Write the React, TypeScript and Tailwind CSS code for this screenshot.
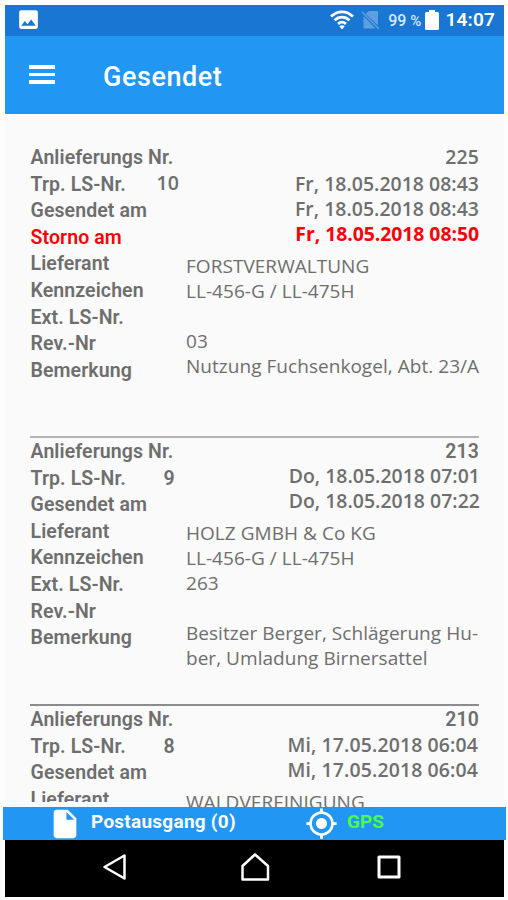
import React from 'react';
import { MdImage, MdInsertDriveFile, MdMyLocation } from 'react-icons/md';

interface Delivery {
  nr: string;
  nrClass: string;
  lsNr: string;
  lsNrClass: string;
  dates: string[];
  dateClass: string;
  storno?: string;
  values: string[]; // Lieferant, Kennzeichen, Ext. LS-Nr., Rev.-Nr, Bemerkung
  labels: string[];
  className: string;
}

const allLabels = ['Lieferant', 'Kennzeichen', 'Ext. LS-Nr.', 'Rev.-Nr', 'Bemerkung'];

const deliveries: Delivery[] = [
  {
    nr: '225',
    nrClass: "h-[27px] font-['Open_Sans',sans-serif]",
    lsNr: '10',
    lsNrClass: "-top-[2px] left-[126px] font-semibold font-['Open_Sans',sans-serif]",
    dates: ['Fr, 18.05.2018 08:43', 'Fr, 18.05.2018 08:43'],
    dateClass: 'tracking-[0.05px]',
    storno: 'Fr, 18.05.2018 08:50',
    values: ['FORSTVERWALTUNG', 'LL-456-G / LL-475H', '', '03', 'Nutzung Fuchsenkogel, Abt. 23/A'],
    labels: allLabels,
    className: 'h-[292px]',
  },
  {
    nr: '213',
    nrClass: 'h-[25px] pt-px font-[Roboto,sans-serif]',
    lsNr: '9',
    lsNrClass: 'top-0 left-[133px]',
    dates: ['Do, 18.05.2018 07:01', 'Do, 18.05.2018 07:22'],
    dateClass: '-mr-px tracking-[0.05px]',
    values: ['HOLZ GMBH & Co KG', 'LL-456-G / LL-475H', '263', '', 'Besitzer Berger, Schlägerung Hu-', 'ber, Umladung Birnersattel'],
    labels: allLabels,
    className: 'h-[268px] border-t-2 border-[#b3b3b3]',
  },
  {
    nr: '210',
    nrClass: 'h-[26px] pt-px font-[Roboto,sans-serif]',
    lsNr: '8',
    lsNrClass: 'top-0 left-[133px]',
    dates: ['Mi, 17.05.2018 06:04', 'Mi, 17.05.2018 06:04'],
    dateClass: 'mr-px tracking-[0.15px]',
    values: ['WALDVEREINIGUNG'],
    labels: ['Lieferant'],
    className: 'h-[103px] border-t-2 border-[#8c8c8c]',
  },
];

const StatusBar: React.FC = () => (
  <div className="h-[31px] bg-[#1976d2] flex items-center text-white pl-[11px] pr-[9px]">
    <MdImage className="w-[25px] h-[25px] -mt-0.5" />
    <div className="flex-1" />
    <svg className="w-[24px] h-[20px] -mt-[2px]" viewBox="0 0 24 20" fill="none" stroke="white" strokeWidth="2.8">
      <path d="M1 6.5C7.5 0.2 16.5 0.2 23 6.5" />
      <path d="M4.6 10.2C9 6.2 15 6.2 19.4 10.2" />
      <path d="M8 13.8C10.4 11.8 13.6 11.8 16 13.8" />
      <path d="M9.3 16.2L12 19.4L14.7 16.2Q12 14.2 9.3 16.2Z" fill="white" stroke="none" />
    </svg>
    <svg className="w-[19px] h-[20px] ml-[7px] -mt-[2px]" viewBox="0 0 19 20">
      <path d="M8 1H17V15.5L4.5 3.8ZM2.5 6L14.5 18.5H2.5Z" fill="#5e9fe0" />
      <path d="M0.8 1.8L18 19" stroke="#5e9fe0" strokeWidth="1.5" />
    </svg>
    <span className="ml-[8px] text-[16px] font-medium text-[#d6e8fa] whitespace-nowrap">
      99 <span className="text-[15px]">%</span>
    </span>
    <svg className="w-[14px] h-[20px] ml-[4px] -mt-[2px]" viewBox="0 0 14 20" fill="white">
      <path d="M4 0H10V2H12.5Q14 2 14 3.5V18.5Q14 20 12.5 20H1.5Q0 20 0 18.5V3.5Q0 2 1.5 2H4Z" />
    </svg>
    <span className="ml-[6px] text-[19px] font-semibold tracking-[0.2px] whitespace-nowrap">14:07</span>
  </div>
);

const Header: React.FC = () => (
  <div className="h-[78px] bg-[#2196f3] flex items-center text-white pl-[24px]">
    <div className="w-[26px] flex flex-col gap-[4px] -mt-[1px]">
      <div className="h-[3.5px] bg-white" />
      <div className="h-[3.5px] bg-white" />
      <div className="h-[3.5px] bg-white" />
    </div>
    <h1 className="ml-[48px] mt-[4px] text-[27px] font-medium tracking-[0.55px]">Gesendet</h1>
  </div>
);

const DeliveryEntry: React.FC<{ delivery: Delivery }> = ({ delivery }) => (
  <div className={`flex shrink-0 text-[#6e6e6e] ${delivery.className}`}>
    <div className="w-[156px] shrink-0 pt-px pl-[0.5px] mb-[5px] overflow-hidden text-[19.5px] font-semibold leading-[26.6px] tracking-[0.1px] whitespace-nowrap">
      <div>Anlieferungs Nr.</div>
      <div className="relative">
        Trp. LS-Nr.
        <span className={`absolute ${delivery.lsNrClass}`}>{delivery.lsNr}</span>
      </div>
      <div>Gesendet am</div>
      {delivery.storno && <div className="text-[#fb0007]">Storno am</div>}
      {delivery.labels.map((label) => (
        <div key={label}>{label}</div>
      ))}
    </div>
    <div className="flex-1 min-w-0 font-['Open_Sans',sans-serif] leading-[25px] whitespace-nowrap">
      <div className="flex flex-col items-end text-[19.4px] font-semibold">
        <div className={`tracking-[0.2px] ${delivery.nrClass}`}>{delivery.nr}</div>
        {delivery.dates.map((date, i) => (
          <div key={i} className={delivery.dateClass}>{date}</div>
        ))}
        {delivery.storno && <div className="text-[#fb0007] font-bold tracking-[-0.05px]">{delivery.storno}</div>}
      </div>
      <div className="mt-[8px] text-[19px] tracking-[0.04px]">
        {delivery.values.map((value, i) => (
          <div key={i} className="h-[25px]">{value}</div>
        ))}
      </div>
    </div>
  </div>
);

const BottomBar: React.FC = () => (
  <div className="h-[33px] -mx-[2px] bg-[#2196f3] flex items-center text-[19px] font-bold text-white">
    <MdInsertDriveFile className="w-[34px] h-[34px] ml-[45px] shrink-0" />
    <span className="ml-[9px] w-[146px] -mt-[2px] tracking-[0.25px] whitespace-nowrap">Postausgang (0)</span>
    <MdMyLocation className="w-[33px] h-[33px] ml-[68px] shrink-0" />
    <span className="ml-[9px] -mt-[2px] text-[#4cfb4f]">GPS</span>
  </div>
);

const NavBar: React.FC = () => (
  <div className="h-[57px] bg-black flex items-center pl-[97px] pb-[3px]">
    <svg className="w-[26px] h-[28px]" viewBox="0 0 26 28" fill="none" stroke="white" strokeWidth="2.5" strokeLinejoin="round">
      <path d="M22.5 2.5V25.5L2.5 14Z" />
    </svg>
    <svg className="w-[30px] h-[30px] ml-[112px]" viewBox="0 0 30 30" fill="none" stroke="white" strokeWidth="2.5" strokeLinejoin="round">
      <path d="M15 2.5L28 14V27.5H2.5V14Z" />
    </svg>
    <svg className="w-[24px] h-[24px] ml-[107px]" viewBox="0 0 24 24" fill="none" stroke="white" strokeWidth="3">
      <path d="M2 2H22V22H2Z" strokeLinejoin="round" />
    </svg>
  </div>
);

export default function App() {
  return (
    <div className="w-[508px] h-[900px] bg-[#fdfdfd] pt-[5px] pl-[5px] pr-[4px] overflow-hidden font-[Roboto,sans-serif]">
      <StatusBar />
      <Header />
      <div className="h-[693px] bg-[#fafafa] pt-[30px] pl-[25px] pr-[25px] flex flex-col overflow-hidden">
        {deliveries.map((delivery) => (
          <DeliveryEntry key={delivery.nr} delivery={delivery} />
        ))}
      </div>
      <BottomBar />
      <NavBar />
    </div>
  );
}
